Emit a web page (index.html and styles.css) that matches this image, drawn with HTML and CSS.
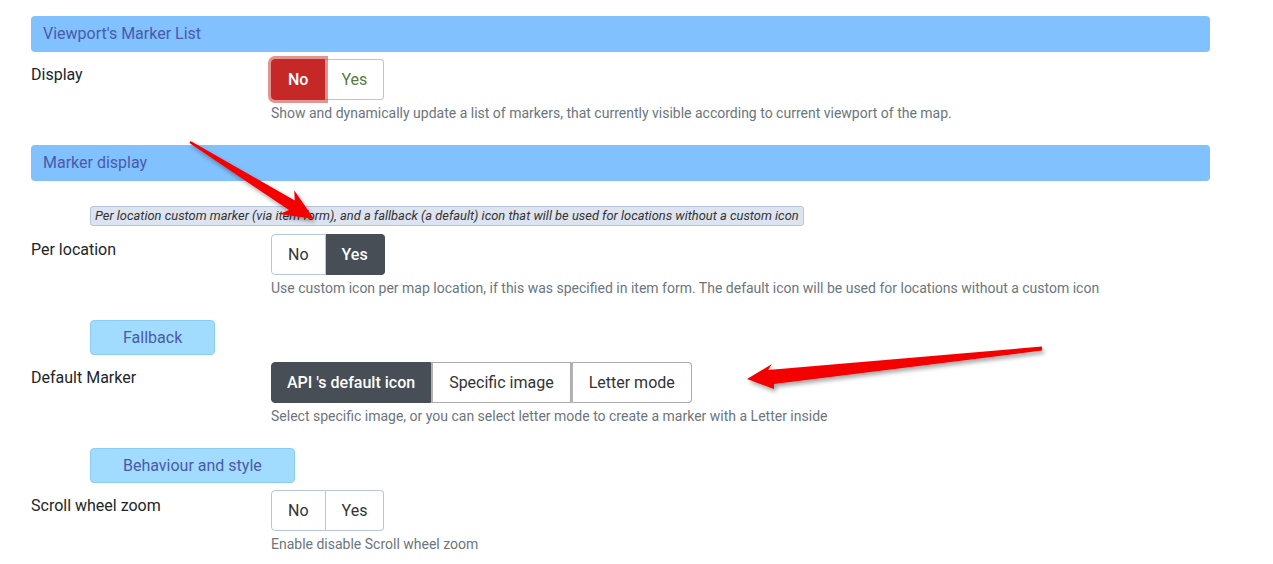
FILE: index.html
```html
<!DOCTYPE html>
<html lang="en">
<head>
  <meta charset="UTF-8" />
  <title>Map settings</title>
  <link rel="stylesheet" href="styles.css">
</head>
<body>
  <div class="page">
    <div class="section-title">Viewport's Marker List</div>

    <div class="field">
      <div class="field-label">Display</div>
      <div class="field-control">
        <div class="btn-group">
          <button class="btn btn-danger">No</button>
          <button class="btn btn-yes">Yes</button>
        </div>
        <div class="help">Show and dynamically update a list of markers, that currently visible according to current viewport of the map.</div>
      </div>
    </div>

    <div class="section-title">Marker display</div>

    <div class="note-row">
      <span class="note">Per location custom marker (via item form), and a fallback (a default) icon that will be used for locations without a custom icon</span>
    </div>

    <div class="field">
      <div class="field-label">Per location</div>
      <div class="field-control">
        <div class="btn-group">
          <button class="btn">No</button>
          <button class="btn btn-dark">Yes</button>
        </div>
        <div class="help">Use custom icon per map location, if this was specified in item form. The default icon will be used for locations without a custom icon</div>
      </div>
    </div>

    <div class="sub-title">Fallback</div>

    <div class="field">
      <div class="field-label">Default Marker</div>
      <div class="field-control">
        <div class="btn-group grey">
          <button class="btn btn-dark">API 's default icon</button>
          <button class="btn">Specific image</button>
          <button class="btn">Letter mode</button>
        </div>
        <div class="help">Select specific image, or you can select letter mode to create a marker with a Letter inside</div>
      </div>
    </div>

    <div class="sub-title">Behaviour and style</div>

    <div class="field">
      <div class="field-label">Scroll wheel zoom</div>
      <div class="field-control">
        <div class="btn-group">
          <button class="btn">No</button>
          <button class="btn">Yes</button>
        </div>
        <div class="help">Enable disable Scroll wheel zoom</div>
      </div>
    </div>
  </div>

  <!-- annotation arrows drawn over the form -->
  <svg class="arrows" width="1273" height="564" viewBox="0 0 1273 564">
    <defs>
      <filter id="shadow" x="-10%" y="-10%" width="130%" height="140%">
        <feDropShadow dx="2" dy="3" stdDeviation="2" flood-color="#000" flood-opacity="0.35"/>
      </filter>
    </defs>
    <polygon filter="url(#shadow)" fill="#f40000"
      points="190.6,141 294.8,200.6 294.2,190.2 314,219 279.4,214 289,210 189.4,143"/>
    <polygon filter="url(#shadow)" fill="#f40000"
      points="1042,346.5 768,370 772,364 747,379 774,389 774,384 1042,350.5"/>
  </svg>
</body>
</html>
```

FILE: styles.css
```css
body {
  margin: 0;
  font-family: Roboto, "Liberation Sans", sans-serif;
  color: #212529;
  background: #fff;
}

.page {
  width: 1179px;
  padding: 16px 0 0 31px;
}

.section-title {
  height: 36px;
  line-height: 36px;
  padding: 0 12px;
  background: #80c1fe;
  border-radius: 4px;
  color: #4a5aab;
  font-size: 16px;
  margin-bottom: 7px;
}

.field {
  display: flex;
  margin-bottom: 22px;
}

.field-label {
  width: 240px;
  flex: none;
  font-size: 16px;
  line-height: 20px;
  padding-top: 6px;
}

.btn-group {
  display: inline-flex;
}

.btn {
  height: 41px;
  padding: 0 16px;
  font-family: inherit;
  font-size: 16px;
  color: #333;
  background: #fff;
  border: 1px solid #b7c6dd;
  margin: 0;
  cursor: pointer;
}

.btn + .btn {
  border-left: none;
}

.btn:first-child {
  border-radius: 4px 0 0 4px;
}

.btn:last-child {
  border-radius: 0 4px 4px 0;
}

.btn-danger {
  background: #c62828;
  border-color: #c62828;
  color: #fff;
  font-weight: 500;
  box-shadow: 0 0 0 3px rgba(198, 40, 40, 0.5);
  position: relative;
}

.btn-yes {
  color: #577a3c;
}

.btn-dark {
  background: #484e55;
  border-color: #484e55;
  color: #fff;
  font-weight: 500;
}

.grey .btn {
  border-color: #ababab;
}

.grey .btn + .btn {
  border-left: 2px solid #b3b3b3;
}

.grey .btn-dark {
  border-color: #484e55;
  padding: 0 15px;
}

.help {
  margin-top: 3px;
  font-size: 14px;
  line-height: 20px;
  color: #6c757d;
}

.note-row {
  display: flex;
  margin: 25px 0 8px 59px;
}

.note {
  font-size: 12.9px;
  font-style: italic;
  line-height: 16px;
  padding: 1px 4px;
  color: #333;
  background: #dde4ef;
  border: 1px solid #b7c5da;
  border-radius: 3px;
}

.sub-title {
  width: fit-content;
  margin: 0 0 7px 59px;
  height: 33px;
  line-height: 33px;
  padding: 0 32px;
  font-size: 16px;
  color: #4a5aab;
  background: #a1dcfe;
  border: 1px solid #8ccdf3;
  border-radius: 4px;
}

.arrows {
  position: absolute;
  top: 0;
  left: 0;
  pointer-events: none;
}
```
